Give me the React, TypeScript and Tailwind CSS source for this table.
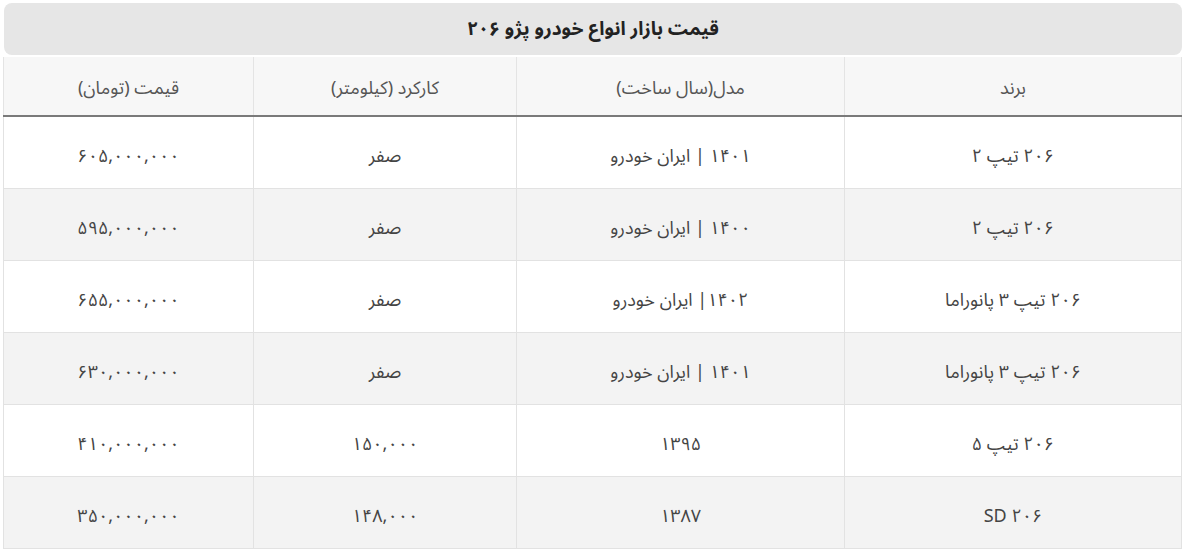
import React from "react";

const rows = [
  { brand: "۲۰۶ تیپ ۲", model: "۱۴۰۱ | ایران خودرو", km: "صفر", price: "۶۰۵,۰۰۰,۰۰۰" },
  { brand: "۲۰۶ تیپ ۲", model: "۱۴۰۰ | ایران خودرو", km: "صفر", price: "۵۹۵,۰۰۰,۰۰۰" },
  { brand: "۲۰۶ تیپ ۳ پانوراما", model: "۱۴۰۲| ایران خودرو", km: "صفر", price: "۶۵۵,۰۰۰,۰۰۰" },
  { brand: "۲۰۶ تیپ ۳ پانوراما", model: "۱۴۰۱ | ایران خودرو", km: "صفر", price: "۶۳۰,۰۰۰,۰۰۰" },
  { brand: "۲۰۶ تیپ ۵", model: "۱۳۹۵", km: "۱۵۰,۰۰۰", price: "۴۱۰,۰۰۰,۰۰۰" },
  { brand: "۲۰۶ SD", model: "۱۳۸۷", km: "۱۴۸,۰۰۰", price: "۳۵۰,۰۰۰,۰۰۰" },
];

export default function App() {
  return (
    <div className="w-[1200px] h-[551px] bg-white overflow-hidden font-['Noto_Sans_Arabic','DejaVu_Sans',sans-serif]">
      <div dir="rtl" className="ml-[4px] mt-[3px] w-[1178px] flex flex-col">
        <div className="h-[52px] rounded-[8px] bg-[#e6e6e6] flex items-center justify-center text-[19px] font-bold text-[#222]">
          قیمت بازار انواع خودرو پژو ۲۰۶
        </div>
        <table className="mt-[2px] w-full border-collapse table-fixed text-[18px] text-[#444]">
          <colgroup>
            <col className="w-[337px]" />
            <col className="w-[328px]" />
            <col className="w-[263px]" />
            <col className="w-[250px]" />
          </colgroup>
          <thead>
            <tr className="h-[59px] bg-[#f7f7f7] border-b-2 border-[#7a7a7a]">
              <th className="font-normal text-[#555] border-x border-[#e4e4e4] pt-[4px]">برند</th>
              <th className="font-normal text-[#555] border-x border-[#e4e4e4] pt-[4px]">مدل(سال ساخت)</th>
              <th className="font-normal text-[#555] border-x border-[#e4e4e4] pt-[4px]">کارکرد (کیلومتر)</th>
              <th className="font-normal text-[#555] border-x border-[#e4e4e4] pt-[4px]">قیمت (تومان)</th>
            </tr>
          </thead>
          <tbody>
            {rows.map((r, i) => (
              <tr key={i} className={`h-[72px] ${i % 2 === 1 ? "bg-[#f3f3f3]" : "bg-white"}`}>
                <td className="text-center border border-[#e2e2e2] pt-[8px]">{r.brand}</td>
                <td className="text-center border border-[#e2e2e2] pt-[8px]">{r.model}</td>
                <td className="text-center border border-[#e2e2e2] pt-[8px]">{r.km}</td>
                <td className="text-center border border-[#e2e2e2] pt-[8px]">{r.price}</td>
              </tr>
            ))}
          </tbody>
        </table>
      </div>
    </div>
  );
}
